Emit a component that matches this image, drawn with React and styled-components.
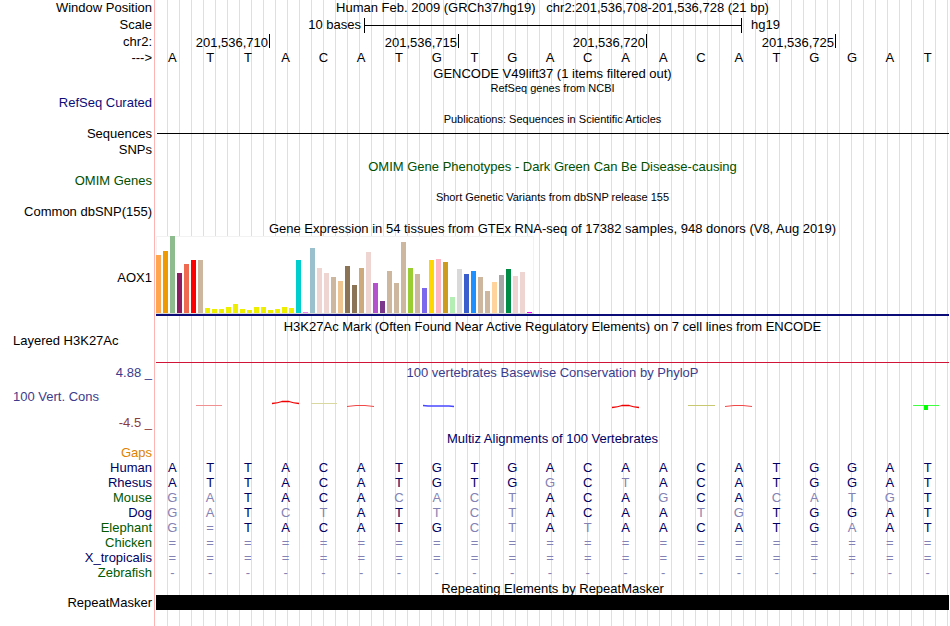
import React from "react";
import styled, { createGlobalStyle } from "styled-components";

const GlobalStyle = createGlobalStyle`
  body { margin: 0; background: #fff; }
`;

const Browser = styled.main`
  min-height: 100vh;
  box-sizing: border-box;
  padding-right: 1px;
  overflow: hidden;
  font: 13px/15px "Liberation Sans", Arial, sans-serif;
  color: #000;
  white-space: pre;
  background:
    linear-gradient(to right, #fff 154px, #ffb4b4 154px, #ffb4b4 155px, #fff 155px) 0 0 / 156px 100% no-repeat,
    linear-gradient(to right, transparent 11px, #dcdcfa 11px) 156px 0 / 12px 100% repeat-x;
`;

const Row = styled.div`
  display: grid;
  grid-template-columns: 152px minmax(0, 1fr);
  column-gap: 4px;
  height: ${(p) => p.$h || 15}px;
  margin-top: ${(p) => p.$gap || 0}px;
  line-height: ${(p) => p.$h || 15}px;
`;

const Label = styled.div`
  grid-column: 1;
  text-align: right;
  color: ${(p) => p.$color || "#000"};
`;

const LeftLabel = styled(Label)`
  text-align: left;
  padding-left: 13px;
`;

const ChartLabel = styled(Label)`
  padding-top: 2px;
`;

const Title = styled.div`
  grid-column: 2;
  text-align: center;
  font-size: ${(p) => (p.$small ? 11 : 13)}px;
  color: ${(p) => p.$color || "#000"};
`;

const Bases = styled.div`
  grid-column: 2;
  display: grid;
  grid-template-columns: repeat(21, minmax(0, 1fr));
`;

const Base = styled.span`
  padding-right: 5px;
  text-align: center;
  color: ${(p) => p.$color};
`;

const ScaleTrack = styled.div`
  grid-column: 2;
  display: grid;
  grid-template-columns: 205fr 381fr 207fr;
  align-items: center;
`;

const ScaleStart = styled.span`
  text-align: right;
`;

const ScaleBar = styled.span`
  height: 15px;
  margin-left: 3px;
  border: solid #000;
  border-width: 0 1px;
  background: linear-gradient(#000, #000) 0 7px / 100% 1px no-repeat;
`;

const ScaleEnd = styled.span`
  padding-left: 9px;
`;

const Ticks = styled.div`
  grid-column: 2;
  display: grid;
  grid-template-columns: 114fr 189fr 188fr 189fr 113fr;
`;

const Tick = styled.span`
  height: 14px;
  padding-right: 1px;
  border-right: 1px solid #000;
  text-align: right;
  line-height: 17px;
`;

const ThinLine = styled.div`
  grid-column: 2;
  align-self: center;
  height: 1px;
  margin-left: 1px;
  background: #000;
`;

const Expression = styled.div`
  grid-column: 2;
  align-self: start;
  border-bottom: 2px solid #0c0c78;
  svg { display: block; }
`;

const SignalLine = styled.div`
  grid-column: 2;
  height: 1px;
  background: #d01438;
`;

const Wiggle = styled.div`
  grid-column: 2;
  svg { display: block; width: 100%; height: 50px; }
`;

const WiggleLabels = styled.div`
  grid-column: 1;
  display: flex;
  flex-direction: column;
  justify-content: space-between;
  padding-top: 9px;
  line-height: 15px;
`;

const MaskerBar = styled.div`
  grid-column: 2;
  background: #000;
`;

const NAVY = "#000064";
const MUTED = "#8282b4";
const GREEN = "#005a00";

const YELLOW = "#eeee00";
const bars = [
  [58, "#ffa54f"], [62, "#ee9a00"], [77, "#8fbc8f"], [40, "#8b1c62"], [49, "#ee6a50"],
  [53, "#ff0000"], [53, "#cdb79e"],
  ...[5, 4, 4, 6, 9, 4, 3, 6, 6, 3, 4, 6, 5].map((h) => [h, YELLOW]),
  [53, "#00cdcd"], [1, "#ee82ee"], [65, "#9ac0cd"], [45, "#eed5d2"], [40, "#eed5d2"],
  [36, "#cdb79e"], [32, "#eec591"], [47, "#8b7355"], [28, "#8b7355"], [45, "#cdaa7d"],
  [61, "#eed5d2"], [30, "#b452cd"], [12, "#7a378b"], [42, "#cdb79e"], [30, "#cdb79e"],
  [71, "#cdb79e"], [45, "#9acd32"], [39, "#cdb79e"], [25, "#7a67ee"], [53, "#ffd700"],
  [54, "#ffb6c1"], [51, "#cd9b1d"], [16, "#b4eeb4"], [44, "#d9d9d9"], [39, "#3a5fcd"],
  [42, "#1e90ff"], [36, "#cdb79e"], [22, "#cdb79e"], [31, "#ffd39b"], [38, "#a6a6a6"],
  [44, "#008b45"], [37, "#eed5d2"], [41, "#eed5d2"], [1, "#ff00ff"],
];

const species = [
  ["Human", NAVY, "ATTACATGTGACAACATGGAT"],
  ["Rhesus", NAVY, "ATTACATGTGGCTACATGGAT"],
  ["Mouse", GREEN, "GATACACACTACAGCACATGT"],
  ["Dog", NAVY, "GATCTATTCTACAATGTGGAT"],
  ["Elephant", GREEN, "G=TACATGCTATAACATGAAT"],
  ["Chicken", GREEN, "====================="],
  ["X_tropicalis", NAVY, "====================="],
  ["Zebrafish", GREEN, "---------------------"],
];
const HUMAN = species[0][2];

function Sequence({ letters, compare }) {
  return (
    <Bases>
      {[...letters].map((c, i) => (
        <Base key={i} $color={!compare ? "#000" : c === HUMAN[i] ? NAVY : MUTED}>{c}</Base>
      ))}
    </Bases>
  );
}

function TitleRow({ children, color, small, h, gap }) {
  return (
    <Row $h={h} $gap={gap}>
      <Title $color={color} $small={small}>{children}</Title>
    </Row>
  );
}

function ExpressionChart() {
  return (
    <svg width="378" height="78" shapeRendering="crispEdges" role="img" aria-label="AOX1 expression by tissue">
      <rect width="378" height="78" fill="#f2f2f2" />
      <rect x="1" y="1" width="376" height="76" fill="#fff" />
      <rect y="77" width="378" height="1" fill="#d8d8d8" />
      {bars.map(([h, fill], i) => (
        <rect key={i} x={i * 7} y={77 - h} width="5" height={h} fill={fill} />
      ))}
    </svg>
  );
}

function ConservationWiggle() {
  return (
    <svg viewBox="0 0 793 50" preserveAspectRatio="none" fill="none" aria-hidden="true">
      <path d="M40 25.5H66" stroke="#f09090" />
      <path d="M116 23.5Q122 23 126 21.5H133Q137 23 143 23.5" stroke="#f00000" strokeWidth="1.3" />
      <path d="M155 23.5H181" stroke="#d8d8a0" />
      <path d="M191 26.5L200 25.5H209L218 26.5" stroke="#f04848" />
      <path d="M267 25.5L272 26H293L298 26.5" stroke="#4848ff" strokeWidth="1.3" />
      <path d="M456 27.5Q462 27 466 25.5H473Q477 27 483 27.5" stroke="#f00000" strokeWidth="1.3" />
      <path d="M532 25.5H559" stroke="#c8c870" />
      <path d="M569 26.5L578 25.5H587L596 26.5" stroke="#f04848" />
      <path d="M757 25.5H783" stroke="#40ff40" />
      <path d="M768 25H772V30H768Z" fill="#00ff00" />
    </svg>
  );
}

export default function App() {
  return (
    <>
      <GlobalStyle />
      <Browser>
        <Row $h={16}>
          <Label>Window Position</Label>
          <Title>{"Human Feb. 2009 (GRCh37/hg19)   chr2:201,536,708-201,536,728 (21 bp)"}</Title>
        </Row>
        <Row $h={18}>
          <Label>Scale</Label>
          <ScaleTrack>
            <ScaleStart>10 bases</ScaleStart>
            <ScaleBar />
            <ScaleEnd>hg19</ScaleEnd>
          </ScaleTrack>
        </Row>
        <Row $h={16}>
          <Label>chr2:</Label>
          <Ticks>
            <Tick>201,536,710</Tick>
            <Tick>201,536,715</Tick>
            <Tick>201,536,720</Tick>
            <Tick>201,536,725</Tick>
          </Ticks>
        </Row>
        <Row>
          <Label>{"--->"}</Label>
          <Sequence letters={HUMAN} />
        </Row>
        <TitleRow gap={1} h={16}>GENCODE V49lift37 (1 items filtered out)</TitleRow>
        <TitleRow h={13} small>RefSeq genes from NCBI</TitleRow>
        <Row>
          <Label $color="#0c0c78">RefSeq Curated</Label>
        </Row>
        <TitleRow gap={2} h={14} small>Publications: Sequences in Scientific Articles</TitleRow>
        <Row>
          <Label>Sequences</Label>
          <ThinLine />
        </Row>
        <Row $gap={1}>
          <Label>SNPs</Label>
        </Row>
        <TitleRow gap={3} h={13} color="#005000">OMIM Gene Phenotypes - Dark Green Can Be Disease-causing</TitleRow>
        <Row>
          <Label $color="#005000">OMIM Genes</Label>
        </Row>
        <TitleRow gap={2} small h={14}>Short Genetic Variants from dbSNP release 155</TitleRow>
        <Row>
          <Label>Common dbSNP(155)</Label>
        </Row>
        <TitleRow gap={2}>Gene Expression in 54 tissues from GTEx RNA-seq of 17382 samples, 948 donors (V8, Aug 2019)</TitleRow>
        <Row $h={80}>
          <ChartLabel>AOX1</ChartLabel>
          <Expression><ExpressionChart /></Expression>
        </Row>
        <TitleRow gap={3}>H3K27Ac Mark (Often Found Near Active Regulatory Elements) on 7 cell lines from ENCODE</TitleRow>
        <Row $h={14}>
          <LeftLabel>Layered H3K27Ac</LeftLabel>
        </Row>
        <Row $gap={14} $h={1}>
          <SignalLine />
        </Row>
        <Row $gap={2}>
          <Label $color="#3c3c8c">4.88 _</Label>
          <Title $color="#3c3c8c">100 vertebrates Basewise Conservation by PhyloP</Title>
        </Row>
        <Row $h={50}>
          <WiggleLabels>
            <LeftLabel $color="#3c3c8c">100 Vert. Cons</LeftLabel>
            <Label $color="#8c3c3c">-4.5 _</Label>
          </WiggleLabels>
          <Wiggle><ConservationWiggle /></Wiggle>
        </Row>
        <TitleRow gap={2} h={13} color={NAVY}>Multiz Alignments of 100 Vertebrates</TitleRow>
        <Row>
          <Label $color="#e08200">Gaps</Label>
        </Row>
        {species.map(([name, color, letters]) => (
          <Row key={name}>
            <Label $color={color}>{name}</Label>
            <Sequence letters={letters} compare />
          </Row>
        ))}
        <TitleRow gap={2} h={13}>Repeating Elements by RepeatMasker</TitleRow>
        <Row>
          <Label>RepeatMasker</Label>
          <MaskerBar />
        </Row>
      </Browser>
    </>
  );
}
